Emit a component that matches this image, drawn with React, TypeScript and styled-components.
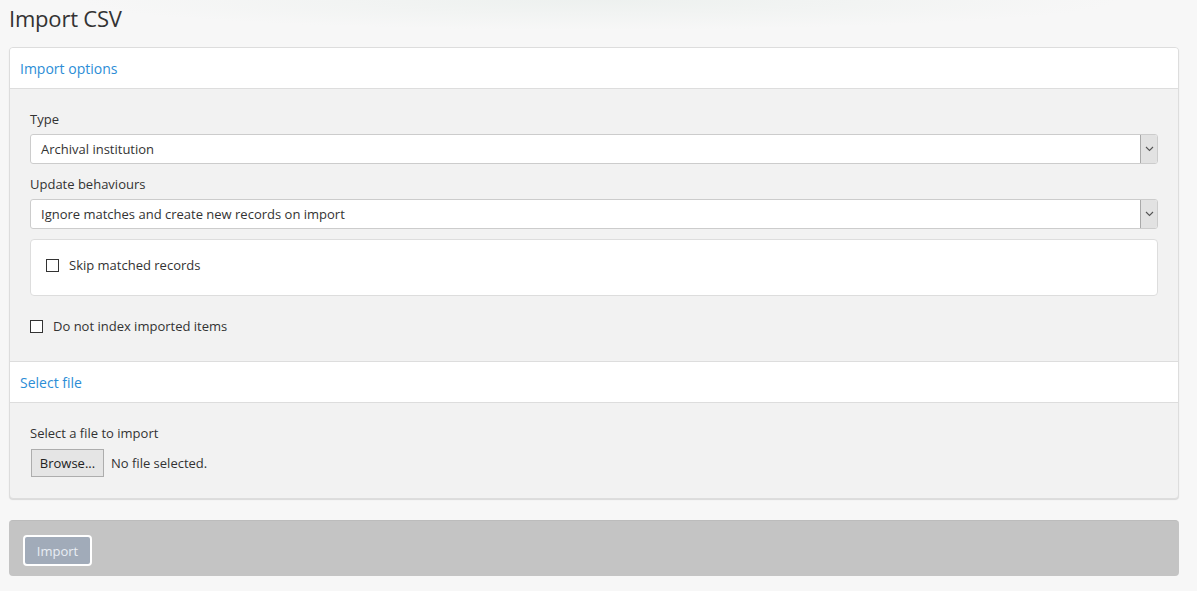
import React from "react";
import styled, { createGlobalStyle } from "styled-components";

const Global = createGlobalStyle`
  html, body { margin: 0; padding: 0; }
  body {
    background: #f7f7f7;
    font-family: "Open Sans", "Liberation Sans", sans-serif;
    font-size: 13px;
    color: #333;
  }
`;

const Page = styled.div`
  position: relative;
  min-height: 591px;
  padding: 0 18px 0 9px;
  background:
    radial-gradient(ellipse 520px 30px at 600px 0px, rgba(236,240,238,0.9), rgba(247,247,247,0) 100%),
    #f7f7f7;
`;

const Title = styled.h1`
  margin: 0;
  padding-top: 3px;
  font-weight: 400;
  font-size: 22px;
  line-height: 30px;
  color: #333;
  letter-spacing: -0.2px;
`;

const Panel = styled.section`
  margin-top: 14px;
  border: 1px solid #ddd;
  border-radius: 4px;
  background: #f2f2f2;
  box-shadow: 0 1px 1px rgba(0, 0, 0, 0.12);
  overflow: hidden;
`;

const PanelHeader = styled.div<{ $first?: boolean }>`
  height: 40px;
  display: flex;
  align-items: center;
  padding: 0 10px;
  background: #fff;
  border-bottom: 1px solid #ddd;
  border-top: ${(p) => (p.$first ? "none" : "1px solid #ddd")};
  color: #2b8dd6;
  font-size: 14px;
`;

const PanelBody = styled.div<{ $pt: number; $pb: number }>`
  padding: ${(p) => p.$pt}px 20px ${(p) => p.$pb}px 20px;
  display: flex;
  flex-direction: column;
`;

const Label = styled.div<{ $mt?: number; $mb?: number }>`
  line-height: 18px;
  margin-top: ${(p) => p.$mt ?? 0}px;
  margin-bottom: ${(p) => p.$mb ?? 6}px;
`;

const Select = styled.div`
  height: 28px;
  display: flex;
  align-items: stretch;
  border: 1px solid #ccc;
  border-radius: 3px;
  background: #fff;
  overflow: hidden;
`;

const SelectValue = styled.div`
  flex: 1;
  display: flex;
  align-items: center;
  padding-left: 10px;
`;

const SelectArrow = styled.div`
  width: 16px;
  display: flex;
  align-items: center;
  justify-content: center;
  background: #e2e2e2;
  border-left: 1px solid #a9a9a9;
`;

const Fieldset = styled.div`
  margin-top: 10px;
  height: 55px;
  box-sizing: content-box;
  border: 1px solid #ddd;
  border-radius: 4px;
  background: #fff;
  display: flex;
  align-items: flex-start;
  padding-left: 15px;
`;

const CheckRow = styled.label<{ $mt?: number }>`
  display: flex;
  align-items: center;
  gap: 10px;
  margin-top: ${(p) => p.$mt ?? 0}px;
  line-height: 18px;
`;

const Box = styled.span`
  width: 11px;
  height: 11px;
  border: 1px solid #333;
  background: #fff;
  display: inline-block;
`;

const FileRow = styled.div`
  display: flex;
  align-items: center;
  gap: 7px;
`;

const BrowseButton = styled.button`
  font-family: inherit;
  font-size: 13px;
  color: #222;
  height: 28px;
  width: 73px;
  padding: 0;
  margin-left: 1px;
  background: #e5e5e5;
  border: 1px solid #adadad;
  border-radius: 0;
`;

const ActionBar = styled.div`
  margin-top: 21px;
  height: 56px;
  border-radius: 4px;
  background: #c4c4c4;
  border-top: 1px solid #bcbcbc;
  box-sizing: border-box;
  display: flex;
  align-items: flex-start;
  padding: 14px 0 0 14px;
`;

const ImportButton = styled.button`
  font-family: inherit;
  font-size: 13px;
  color: #e9eef4;
  height: 31px;
  width: 69px;
  padding: 0;
  background: #a1abb9;
  border: 2px solid #fff;
  border-radius: 4px;
`;

const Chevron = () => (
  <svg width="9" height="6" viewBox="0 0 9 6">
    <path d="M1 1 L4.5 4.5 L8 1" fill="none" stroke="#555" strokeWidth="1.1" />
  </svg>
);

export default function App() {
  return (
    <>
      <Global />
      <Page>
        <Title>Import CSV</Title>
        <Panel>
          <PanelHeader $first>Import options</PanelHeader>
          <PanelBody $pt={21} $pb={26}>
            <Label>Type</Label>
            <Select>
              <SelectValue>Archival institution</SelectValue>
              <SelectArrow>
                <Chevron />
              </SelectArrow>
            </Select>
            <Label $mt={11}>Update behaviours</Label>
            <Select>
              <SelectValue>Ignore matches and create new records on import</SelectValue>
              <SelectArrow>
                <Chevron />
              </SelectArrow>
            </Select>
            <Fieldset>
              <CheckRow $mt={16}>
                <Box />
                Skip matched records
              </CheckRow>
            </Fieldset>
            <CheckRow $mt={21}>
              <Box />
              Do not index imported items
            </CheckRow>
          </PanelBody>
          <PanelHeader>Select file</PanelHeader>
          <PanelBody $pt={21} $pb={21}>
            <Label $mb={7}>Select a file to import</Label>
            <FileRow>
              <BrowseButton>Browse...</BrowseButton>
              <span>No file selected.</span>
            </FileRow>
          </PanelBody>
        </Panel>
        <ActionBar>
          <ImportButton>Import</ImportButton>
        </ActionBar>
      </Page>
    </>
  );
}
